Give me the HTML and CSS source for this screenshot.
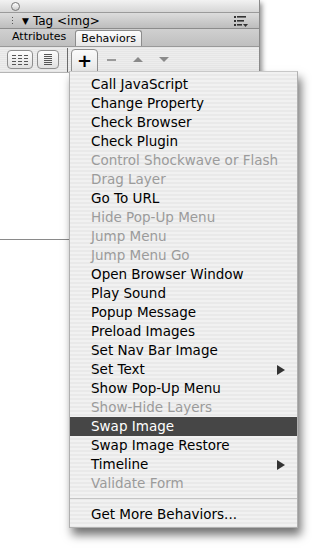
FILE: index.html
```html
<!DOCTYPE html>
<html>

<head>
    <meta charset="utf-8">
    <title>Tag Inspector</title>
    <link rel="stylesheet" href="styles.css">
</head>

<body>

    <div class="panel">

        <div class="titlebar">
            <span class="close"></span>
        </div>

        <div class="header">
            <span class="grip"></span>
            <span class="arrow">&#9660;</span>
            <span class="title">Tag &lt;img&gt;</span>
            <svg class="opts" width="14" height="12" viewBox="0 0 14 12">
                <rect x="0" y="1" width="2" height="2" fill="#333"/>
                <rect x="3" y="1" width="9" height="1.6" fill="#333"/>
                <rect x="0" y="5" width="2" height="2" fill="#333"/>
                <rect x="3" y="5" width="7" height="1.6" fill="#333"/>
                <rect x="0" y="9" width="2" height="2" fill="#333"/>
                <rect x="3" y="9" width="5" height="1.6" fill="#333"/>
                <polygon points="9,9 14,9 11.5,12" fill="#333"/>
            </svg>
        </div>

        <div class="tabs">
            <span class="tab">Attributes</span>
            <span class="tab active">Behaviors</span>
        </div>

        <div class="toolbar">
            <span class="viewbtn">
                <svg width="16" height="12" viewBox="0 0 16 12">
                    <g stroke="#555" stroke-width="1">
                        <path d="M0 1.5h4M0 4.5h4M0 7.5h4M0 10.5h4"/>
                        <path d="M6 1.5h4M6 4.5h4M6 7.5h4M6 10.5h4"/>
                        <path d="M12 1.5h4M12 4.5h4M12 7.5h4M12 10.5h4"/>
                    </g>
                </svg>
            </span>
            <span class="viewbtn small">
                <svg width="8" height="13" viewBox="0 0 8 13">
                    <g stroke="#555" stroke-width="1">
                        <path d="M0 1.5h8M0 3.5h8M0 5.5h8M0 7.5h8M0 9.5h8M0 11.5h8"/>
                    </g>
                </svg>
            </span>
            <span class="divider"></span>
            <span class="tool plus">+</span>
            <span class="tool minus"></span>
            <span class="tool up"></span>
            <span class="tool down"></span>
        </div>

        <div class="content"></div>

    </div>

    <div class="menu">
        <div class="item">Call JavaScript</div>
        <div class="item">Change Property</div>
        <div class="item">Check Browser</div>
        <div class="item">Check Plugin</div>
        <div class="item off">Control Shockwave or Flash</div>
        <div class="item off">Drag Layer</div>
        <div class="item">Go To URL</div>
        <div class="item off">Hide Pop-Up Menu</div>
        <div class="item off">Jump Menu</div>
        <div class="item off">Jump Menu Go</div>
        <div class="item">Open Browser Window</div>
        <div class="item">Play Sound</div>
        <div class="item">Popup Message</div>
        <div class="item">Preload Images</div>
        <div class="item">Set Nav Bar Image</div>
        <div class="item sub">Set Text</div>
        <div class="item">Show Pop-Up Menu</div>
        <div class="item off">Show-Hide Layers</div>
        <div class="item selected">Swap Image</div>
        <div class="item">Swap Image Restore</div>
        <div class="item sub">Timeline</div>
        <div class="item off">Validate Form</div>
        <div class="sep"></div>
        <div class="item">Get More Behaviors...</div>
    </div>

</body>

</html>
```

FILE: styles.css
```css
body {
    margin: 0;
    background: #fff;
    font-family: "DejaVu Sans", "Liberation Sans", sans-serif;
    color: #000;
}

/* panel */

.panel {
    width: 259px;
    border-right: 1px solid #8a8a8a;
    border-bottom: 1px solid #8a8a8a;
    box-shadow: 2px 3px 5px rgba(0, 0, 0, 0.45);
    background: #fff;
}

.titlebar {
    height: 12px;
    background: linear-gradient(#f2f2f2, #d6d6d6);
    border-bottom: 1px solid #9a9a9a;
    display: flex;
    align-items: center;
    padding-left: 11px;
}

.close {
    width: 7px;
    height: 7px;
    border: 1px solid #777;
    border-radius: 50%;
    background: linear-gradient(#fff, #ccc);
}

.header {
    height: 15px;
    background: linear-gradient(#dcdcdc, #bdbdbd);
    border-bottom: 1px solid #8c8c8c;
    display: flex;
    align-items: center;
    font-size: 12px;
    padding-left: 11px;
}

.grip {
    width: 3px;
    height: 9px;
    background-image: radial-gradient(#555 40%, transparent 45%);
    background-size: 3px 3px;
    margin-right: 8px;
}

.arrow {
    font-size: 9px;
    margin-right: 4px;
}

.title {
    flex: 1;
}

.opts {
    margin-right: 11px;
}

.tabs {
    height: 17px;
    background: linear-gradient(#d0d0d0, #bfbfbf);
    border-bottom: 1px solid #999;
    display: flex;
    align-items: flex-end;
    padding-left: 4px;
    font-size: 11px;
}

.tab {
    padding: 0 8px 2px 8px;
    line-height: 14px;
}

.tab.active {
    background: linear-gradient(#fdfdfd, #e6e6e6);
    border: 1px solid #8c8c8c;
    border-bottom: 0;
    border-radius: 3px 3px 0 0;
    padding: 1px 5px 0 5px;
    margin-left: 1px;
}

.toolbar {
    height: 25px;
    background: repeating-linear-gradient(#e6e6e6 0, #e6e6e6 1px, #ededed 1px, #ededed 2px);
    border-bottom: 1px solid #b5b5b5;
    display: flex;
    align-items: center;
    padding-left: 7px;
}

.viewbtn {
    width: 24px;
    height: 17px;
    border: 1px solid #8e8e8e;
    border-radius: 4px;
    background: linear-gradient(#fdfdfd, #e0e0e0);
    display: flex;
    align-items: center;
    justify-content: center;
    margin-right: 4px;
}

.viewbtn.small {
    width: 20px;
}

.divider {
    width: 1px;
    height: 24px;
    background: #6b6b6b;
    margin: 0 3px 0 4px;
}

.tool {
    width: 25px;
    height: 22px;
    margin-right: 1px;
    display: flex;
    align-items: center;
    justify-content: center;
    position: relative;
}

.tool.plus {
    border: 1px solid #8e8e8e;
    border-radius: 4px 4px 0 0;
    background: linear-gradient(#fafafa, #e8e8e8);
    font-size: 18px;
    font-weight: bold;
    height: 21px;
    margin-top: 2px;
}

.tool.minus::before {
    content: "";
    width: 9px;
    height: 2px;
    background: #9a9a9a;
}

.tool.up::before {
    content: "";
    border: 5px solid transparent;
    border-bottom: 5px solid #8a8a8a;
    border-top: 0;
}

.tool.down::before {
    content: "";
    border: 5px solid transparent;
    border-top: 5px solid #8a8a8a;
    border-bottom: 0;
}

.content {
    height: 166px;
    background: #fff;
}

/* pop-up menu */

.menu {
    position: absolute;
    left: 69px;
    top: 71px;
    width: 227px;
    padding: 3px 0 3px 0;
    background: repeating-linear-gradient(#f1f1f1 0, #f1f1f1 2px, #e9e9e9 2px, #e9e9e9 4px);
    border: 1px solid #b0b0b0;
    border-top-color: #c8c8c8;
    box-shadow: 3px 7px 9px rgba(0, 0, 0, 0.55);
    font-size: 13.5px;
}

.item {
    height: 19px;
    line-height: 19px;
    padding-left: 21px;
    position: relative;
    white-space: nowrap;
}

.item.off {
    color: #9b9b9b;
}

.item.selected {
    background: #464646;
    color: #fff;
}

.item.sub::after {
    content: "";
    position: absolute;
    right: 12px;
    top: 5px;
    border: 5px solid transparent;
    border-left: 8px solid #333;
    border-right: 0;
}

.sep {
    height: 1px;
    background: #c4c4c4;
    margin: 5px 0 6px 0;
}
```
